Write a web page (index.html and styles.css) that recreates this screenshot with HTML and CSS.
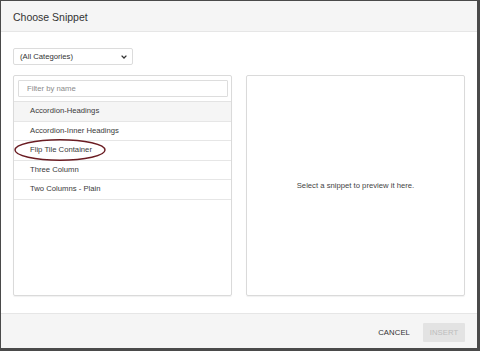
FILE: index.html
```html
<!DOCTYPE html>
<html>
<head>
<meta charset="utf-8">
<link rel="stylesheet" href="styles.css">
</head>
<body>
<div class="dialog">
  <div class="header"><span class="title">Choose Snippet</span></div>
  <div class="body">
    <div class="select">
      <span>(All Categories)</span>
      <svg class="chev" width="6" height="4" viewBox="0 0 6 4"><path d="M0.6 0.6 L3 3 L5.4 0.6" fill="none" stroke="#333" stroke-width="1.3"/></svg>
    </div>
    <div class="panels">
      <div class="panel list-panel">
        <div class="filter-wrap"><input class="filter" placeholder="Filter by name"></div>
        <ul class="list">
          <li class="item active">Accordion-Headings</li>
          <li class="item">Accordion-Inner Headings</li>
          <li class="item marked">Flip Tile Container
            <svg class="circle" width="94" height="24" viewBox="0 0 94 24"><ellipse cx="46" cy="12" rx="45" ry="10.3" fill="none" stroke="#6a1c22" stroke-width="1.4"/></svg>
          </li>
          <li class="item">Three Column</li>
          <li class="item">Two Columns - Plain</li>
        </ul>
      </div>
      <div class="panel preview">Select a snippet to preview it here.</div>
    </div>
  </div>
  <div class="footer">
    <span class="cancel">CANCEL</span>
    <span class="insert">INSERT</span>
  </div>
</div>
</body>
</html>
```

FILE: styles.css
```css
html, body {
  margin: 0;
  padding: 0;
}
body {
  background: #4a4a4a;
  width: 480px;
  height: 351px;
  overflow: hidden;
  font-family: "Liberation Sans", Arial, sans-serif;
  color: #333;
}
.dialog {
  margin: 1px 3px 0 1px;
  height: 347px;
  background: #fff;
  display: flex;
  flex-direction: column;
}
.header {
  height: 30px;
  line-height: 30px;
  background: #f5f5f5;
  border-bottom: 1px solid #e6e6e6;
  padding-left: 12px;
}
.title {
  font-size: 10.5px;
  color: #333;
}
.body {
  flex: 1;
  padding: 16px 12px 15px 12px;
  display: flex;
  flex-direction: column;
}
.select {
  width: 107px;
  height: 15px;
  border: 1px solid #dcdcdc;
  border-radius: 2px;
  display: flex;
  align-items: center;
  justify-content: space-between;
  padding: 0 5px 0 6px;
  font-size: 7.7px;
  color: #333;
  box-sizing: content-box;
}
.chev {
  display: block;
}
.panels {
  margin-top: 10px;
  display: flex;
  gap: 14px;
  height: 221px;
}
.panel {
  flex: 1;
  border: 1px solid #dadada;
  box-shadow: 0 1px 1px rgba(0,0,0,0.06);
  border-radius: 2px;
}
.list-panel {
  display: flex;
  flex-direction: column;
}
.filter-wrap {
  padding: 4px 3px 4px 4px;
}
.filter {
  display: block;
  width: 100%;
  box-sizing: border-box;
  height: 17px;
  border: 1px solid #dddddd;
  border-radius: 1px;
  padding: 0 8px;
  font-family: "Liberation Sans", Arial, sans-serif;
  font-size: 7.7px;
  outline: none;
}
.filter::placeholder {
  color: #8a8a8a;
}
.list {
  list-style: none;
  margin: 0;
  padding: 0;
  border-top: 1px solid #e3e3e3;
}
.item {
  position: relative;
  height: 18.5px;
  line-height: 18.5px;
  border-bottom: 1px solid #e6e6e6;
  padding-left: 16px;
  font-size: 7.7px;
  color: #3a3a3a;
}
.item.active {
  background: #f5f5f5;
}
.circle {
  position: absolute;
  left: 0;
  top: -3px;
}
.preview {
  display: flex;
  align-items: center;
  justify-content: center;
  font-size: 7.7px;
  color: #444;
}
.footer {
  height: 35px;
  background: #f5f5f5;
  border-top: 1px solid #e6e6e6;
  display: flex;
  align-items: center;
  justify-content: flex-end;
  padding: 3px 12px 0 0;
  box-sizing: border-box;
  font-size: 7.7px;
}
.cancel {
  color: #333;
  margin-right: 13px;
  letter-spacing: 0.1px;
}
.insert {
  width: 42px;
  height: 19px;
  line-height: 19px;
  text-align: center;
  background: #e3e3e3;
  color: #bdbdbd;
  border-radius: 1px;
  letter-spacing: 0.1px;
}
```
